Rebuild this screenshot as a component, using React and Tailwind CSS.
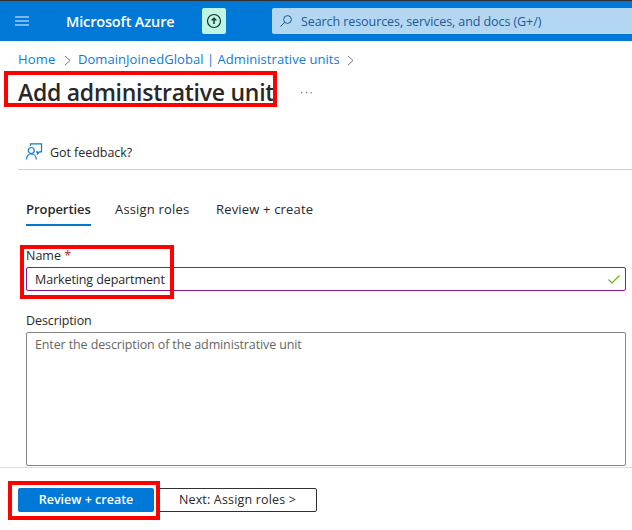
import React from "react";

function Highlight({ className }) {
  return <div className={`pointer-events-none absolute border-4 border-[#ff0000] ${className}`} />;
}

function Chevron({ className = "" }) {
  return (
    <svg className={`h-[11px] w-[7px] shrink-0 ${className}`} viewBox="0 0 7 11" fill="none" stroke="#767676" strokeWidth="1">
      <path d="M1 1l5 4.5L1 10" />
    </svg>
  );
}

function Header() {
  return (
    <header className="flex h-[41px] items-center border-t border-[#323130] bg-[#0078d7]">
      <svg className="ml-[15px] h-[10px] w-[14px] shrink-0" viewBox="0 0 14 10" fill="#78b9ec">
        <path d="M0 0h14v2H0zM0 4h14v2H0zM0 8h14v2H0z" />
      </svg>
      <span className="ml-[37px] w-[136px] pt-[2px] text-[14.5px] leading-5 font-semibold tracking-[-0.15px] text-white">Microsoft Azure</span>
      <span className="flex h-[26px] w-6 shrink-0 items-center justify-center rounded-[2px] bg-[#bff5e3]">
        <svg className="h-[16px] w-[16px]" viewBox="0 0 16 16" fill="none" stroke="#10302c">
          <circle cx="8" cy="8" r="6.5" strokeWidth="1.2" />
          <path d="M8 11V5.500" strokeWidth="1.500" />
          <path d="M5.600 7.500L8 5.100l2.400 2.400" strokeWidth="1.200" />
        </svg>
      </span>
      <div className="ml-[46px] flex h-[26px] flex-1 items-center rounded-l-[2px] bg-[#b3d6f2] text-[#1b5a92]">
        <svg className="ml-2 h-3 w-3 shrink-0" viewBox="0 0 12 12" fill="none" stroke="currentColor" strokeWidth="1">
          <circle cx="7.500" cy="4.500" r="3.900" />
          <path d="M4.700 7.300L.4 11.600" />
        </svg>
        <span className="ml-[9px] pt-[2px] text-[12.5px] leading-5 tracking-[-0.08px] whitespace-nowrap">Search resources, services, and docs (G+/)</span>
      </div>
    </header>
  );
}

export default function App() {
  return (
    <div className="relative flex h-[530px] w-[632px] flex-col overflow-hidden bg-white font-['Open_Sans','Noto_Sans',sans-serif] text-[12.5px] leading-5 whitespace-nowrap text-[#292827]">
      <Header />
      <nav className="mt-2 flex h-5 items-center pl-[18px] text-[13px] text-[#0f7bd4]">
        <span className="w-[46px] tracking-[0.15px]">Home</span>
        <Chevron className="mt-[2px]" />
        <span className="ml-[7px] w-[269px] tracking-[0.05px]">DomainJoinedGlobal | Administrative units</span>
        <Chevron className="mt-[2px]" />
      </nav>
      <div className="mt-[7px] flex h-8 items-center pl-[18px]">
        <h1 className="w-[283px] text-[23px] leading-8 font-semibold tracking-[-0.26px]">Add administrative unit</h1>
        <svg className="mt-[2px] h-[2px] w-[11px]" viewBox="0 0 11 2" fill="#777">
          <path d="M0 0h1.300v1.300H0zM5 0h1.300v1.300H5zM9.500 0h1.300v1.300H9.500z" />
        </svg>
      </div>
      <div className="mt-[26px] ml-[18px] flex h-9 items-center border-b border-[#d0d0d0] pl-2">
        <svg className="h-[17px] w-[17px]" viewBox="0 0 17 17" fill="none" stroke="#0f7bd4" strokeWidth="1.2">
          <path d="M4.500 3V.8h11v8h-2L11.500 11V8.800H10" />
          <circle cx="5.300" cy="7.500" r="3" />
          <path d="M.6 16.500c0-3.400 2-5.500 4.700-5.500s5 2.100 5 5.500" />
        </svg>
        <span className="ml-[7px] pt-[2px] tracking-[-0.05px]">Got feedback?</span>
      </div>
      <div className="mt-[29px] ml-[26px] flex h-[27px] text-[13px]">
        <span className="w-[65px] border-b-2 border-[#0078d7] font-semibold tracking-[-0.05px]">Properties</span>
        <span className="ml-6 w-[76px] tracking-[0.17px]">Assign roles</span>
        <span className="ml-[25px] tracking-[0.17px]">Review + create</span>
      </div>
      <main className="mr-[6px] ml-[26px] flex flex-col">
        <label className="mt-5 h-[21px]">Name <span className="text-[#a4262c]">*</span></label>
        <div className="flex h-6 items-center justify-between rounded-[2px] border border-[#881798] pr-[5px] pl-2">
          <span className="pt-[2px] tracking-[-0.1px]">Marketing department</span>
          <svg className="h-[9px] w-[12px]" viewBox="0 0 12 9" fill="none" stroke="#6bb028" strokeWidth="1.2">
            <path d="M.5 4.500L4 8l7.500-7.500" />
          </svg>
        </div>
        <label className="mt-5 h-[21px] tracking-[-0.1px]">Description</label>
        <div className="h-[134px] rounded-[2px] border border-[#858585] px-2 pt-[2px] tracking-[-0.12px] text-[#666]">
          Enter the description of the administrative unit
        </div>
      </main>
      <footer className="mt-[1px] flex h-[63px] items-start gap-1 border-t border-[#dcdcdc] pt-5 pl-[18px]">
        <button className="flex h-6 w-[136px] items-center justify-center rounded-[2px] bg-[#0078d7] font-semibold text-white">Review + create</button>
        <button className="flex h-6 w-[159px] items-center justify-center rounded-[2px] border border-[#323130] tracking-[0.17px]">Next: Assign roles &gt;</button>
      </footer>
      <Highlight className="top-[71px] left-[4px] h-[36px] w-[273px]" />
      <Highlight className="top-[245px] left-[20px] h-[54px] w-[154px]" />
      <Highlight className="top-[481px] left-[8px] h-[39px] w-[152px]" />
    </div>
  );
}
